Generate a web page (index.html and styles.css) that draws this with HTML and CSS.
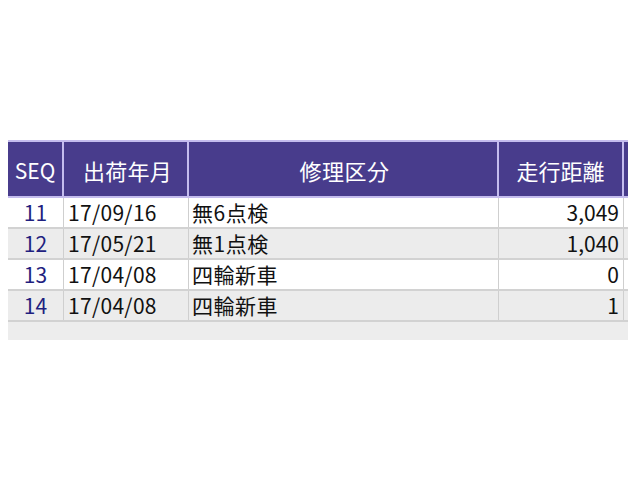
FILE: index.html
```html
<!DOCTYPE html>
<html lang="ja">
<head>
<meta charset="utf-8">
<link rel="stylesheet" href="styles.css">
</head>
<body>
<div class="page">
  <div class="grid">
    <div class="row head">
      <div class="c seq">SEQ</div>
      <div class="c date">出荷年月</div>
      <div class="c kind">修理区分</div>
      <div class="c dist">走行距離</div>
      <div class="c extra"></div>
    </div>
    <div class="row odd">
      <div class="c seq">11</div>
      <div class="c date">17/09/16</div>
      <div class="c kind">無6点検</div>
      <div class="c dist">3,049</div>
      <div class="c extra"></div>
    </div>
    <div class="row even">
      <div class="c seq">12</div>
      <div class="c date">17/05/21</div>
      <div class="c kind">無1点検</div>
      <div class="c dist">1,040</div>
      <div class="c extra"></div>
    </div>
    <div class="row odd">
      <div class="c seq">13</div>
      <div class="c date">17/04/08</div>
      <div class="c kind">四輪新車</div>
      <div class="c dist">0</div>
      <div class="c extra"></div>
    </div>
    <div class="row even">
      <div class="c seq">14</div>
      <div class="c date">17/04/08</div>
      <div class="c kind">四輪新車</div>
      <div class="c dist">1</div>
      <div class="c extra"></div>
    </div>
    <div class="foot"></div>
  </div>
</div>
</body>
</html>
```
FILE: styles.css
```css
html, body {
  margin: 0;
  padding: 0;
  background: #ffffff;
}
body {
  font-family: "Noto Sans CJK JP", "Noto Sans", sans-serif;
  color: #111111;
}
.page {
  padding: 140px 0 0 8px;
}
.grid {
  width: 620px;
  overflow: hidden;
}
.row {
  display: grid;
  grid-template-columns: 56px 125px 310px 125px 7px;
}
.c {
  display: flex;
  align-items: center;
  font-size: 21px;
  line-height: 1;
  white-space: nowrap;
  box-sizing: border-box;
}
.head {
  height: 58px;
  background: #483c8c;
  border-top: 2px solid #c4bcee;
  border-bottom: 2px solid #c4bcee;
  box-sizing: border-box;
}
.head .c {
  color: #ffffff;
  justify-content: center;
  border-right: 2px solid #c4bcee;
  font-size: 22px;
  padding-top: 2px;
}
.head .seq {
  font-size: 21px;
}
.head .extra {
  border-right: none;
}
.odd, .even {
  height: 31px;
  border-bottom: 2px solid #d2d2d2;
  box-sizing: border-box;
}
.odd { background: #ffffff; }
.even { background: #ececec; }
.odd .c, .even .c {
  border-right: 1px solid #cfcfcf;
}
.seq {
  justify-content: center;
}
.odd .seq, .even .seq {
  color: #1f1f80;
}
.date {
  padding-left: 4px;
  letter-spacing: 0.3px;
}
.kind {
  padding-left: 3px;
  letter-spacing: 0.5px;
}
.odd .dist, .even .dist {
  justify-content: flex-end;
  padding-right: 4px;
}
.foot {
  height: 18px;
  background: #ededed;
}
```
